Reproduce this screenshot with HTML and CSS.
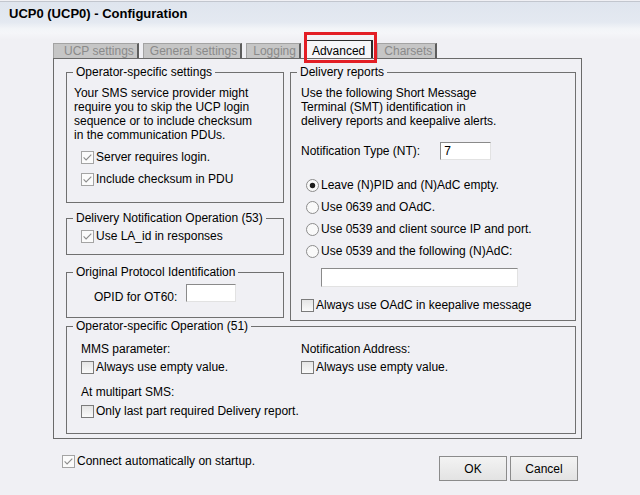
FILE: index.html
```html
<!DOCTYPE html>
<html lang="en">
<head>
<meta charset="utf-8">
<title>UCP0 (UCP0) - Configuration</title>
<link rel="stylesheet" href="styles.css">
</head>
<body>
<div class="window">
  <header class="titlebar"><span class="title">UCP0 (UCP0) - Configuration</span></header>

  <nav class="tabs">
    <span class="tab first">UCP settings</span>
    <span class="tab">General settings</span>
    <span class="tab">Logging</span>
    <span class="tab active">Advanced</span>
    <span class="tab">Charsets</span>
  </nav>

  <section class="panel">
    <div class="columns">
      <div class="col-left">
        <div class="group g-operator">
          <div class="legend">Operator-specific settings</div>
          <p class="desc">Your SMS service provider might<br>require you to skip the UCP login<br>sequence or to include checksum<br>in the communication PDUs.</p>
          <div class="checks">
            <label class="check">
              <svg class="box" width="13" height="13" viewBox="0 0 13 13"><rect x=".5" y=".5" width="12" height="12" fill="#fbfbfb" stroke="#a4a4a4"/><path d="M2.6 6.4 5.1 9 10.3 3.6" fill="none" stroke="#8c8c8c" stroke-width="1.1"/></svg>
              <span>Server requires login.</span>
            </label>
            <label class="check">
              <svg class="box" width="13" height="13" viewBox="0 0 13 13"><rect x=".5" y=".5" width="12" height="12" fill="#fbfbfb" stroke="#a4a4a4"/><path d="M2.6 6.4 5.1 9 10.3 3.6" fill="none" stroke="#8c8c8c" stroke-width="1.1"/></svg>
              <span>Include checksum in PDU</span>
            </label>
          </div>
        </div>

        <div class="group g-dno">
          <div class="legend">Delivery Notification Operation (53)</div>
          <div class="checks">
            <label class="check">
              <svg class="box" width="13" height="13" viewBox="0 0 13 13"><rect x=".5" y=".5" width="12" height="12" fill="#fbfbfb" stroke="#a4a4a4"/><path d="M2.6 6.4 5.1 9 10.3 3.6" fill="none" stroke="#8c8c8c" stroke-width="1.1"/></svg>
              <span>Use LA_id in responses</span>
            </label>
          </div>
        </div>

        <div class="group g-opid">
          <div class="legend">Original Protocol Identification</div>
          <div class="opid-row">
            <span class="opid-label">OPID for OT60:</span>
            <span class="field opid-field"></span>
          </div>
        </div>
      </div>

      <div class="group g-delivery">
        <div class="legend">Delivery reports</div>
        <p class="desc desc-right">Use the following Short Message<br>Terminal (SMT) identification in<br>delivery reports and keepalive alerts.</p>
        <div class="nt-row">
          <span class="nt-label">Notification Type (NT):</span>
          <span class="field nt-field">7</span>
        </div>
        <div class="radios">
          <label class="radio">
            <svg width="13" height="13" viewBox="0 0 13 13"><circle cx="6.5" cy="6.5" r="6" fill="#f9f9f9" stroke="#8c8c8c"/><circle cx="6.5" cy="6.5" r="2.7" fill="#1c1c1c"/></svg>
            <span>Leave (N)PID and (N)AdC empty.</span>
          </label>
          <label class="radio">
            <svg width="13" height="13" viewBox="0 0 13 13"><circle cx="6.5" cy="6.5" r="6" fill="#f9f9f9" stroke="#8c8c8c"/></svg>
            <span>Use 0639 and OAdC.</span>
          </label>
          <label class="radio">
            <svg width="13" height="13" viewBox="0 0 13 13"><circle cx="6.5" cy="6.5" r="6" fill="#f9f9f9" stroke="#8c8c8c"/></svg>
            <span>Use 0539 and client source IP and port.</span>
          </label>
          <label class="radio">
            <svg width="13" height="13" viewBox="0 0 13 13"><circle cx="6.5" cy="6.5" r="6" fill="#f9f9f9" stroke="#8c8c8c"/></svg>
            <span>Use 0539 and the following (N)AdC:</span>
          </label>
        </div>
        <span class="field adc-field"></span>
        <label class="check keepalive">
          <svg class="box" width="13" height="13" viewBox="0 0 13 13"><defs><linearGradient id="ub1" x1="0" y1="0" x2="0" y2="1"><stop offset="0" stop-color="#e4e4e4"/><stop offset="1" stop-color="#fbfbfb"/></linearGradient></defs><rect x=".5" y=".5" width="12" height="12" fill="url(#ub1)" stroke="#7b7b7b"/></svg>
          <span>Always use OAdC in keepalive message</span>
        </label>
      </div>
    </div>

    <div class="group g-operation">
      <div class="legend">Operator-specific Operation (51)</div>
      <div class="op-grid">
        <div class="op-col">
          <div class="op-label">MMS parameter:</div>
          <label class="check">
            <svg class="box" width="13" height="13" viewBox="0 0 13 13"><rect x=".5" y=".5" width="12" height="12" fill="url(#ub1)" stroke="#7b7b7b"/></svg>
            <span>Always use empty value.</span>
          </label>
          <div class="op-label op-label-2">At multipart SMS:</div>
          <label class="check">
            <svg class="box" width="13" height="13" viewBox="0 0 13 13"><rect x=".5" y=".5" width="12" height="12" fill="url(#ub1)" stroke="#7b7b7b"/></svg>
            <span>Only last part required Delivery report.</span>
          </label>
        </div>
        <div class="op-col">
          <div class="op-label">Notification Address:</div>
          <label class="check">
            <svg class="box" width="13" height="13" viewBox="0 0 13 13"><rect x=".5" y=".5" width="12" height="12" fill="url(#ub1)" stroke="#7b7b7b"/></svg>
            <span>Always use empty value.</span>
          </label>
        </div>
      </div>
    </div>
  </section>

  <footer class="footer">
    <label class="check autoconnect">
      <svg class="box" width="13" height="13" viewBox="0 0 13 13"><rect x=".5" y=".5" width="12" height="12" fill="#fbfbfb" stroke="#a4a4a4"/><path d="M2.6 6.4 5.1 9 10.3 3.6" fill="none" stroke="#8c8c8c" stroke-width="1.1"/></svg>
      <span>Connect automatically on startup.</span>
    </label>
    <div class="buttons">
      <button class="btn" type="button">OK</button>
      <button class="btn" type="button">Cancel</button>
    </div>
  </footer>
</div>
</body>
</html>
```

FILE: styles.css
```css
* { box-sizing: border-box; }

html, body {
  margin: 0;
  padding: 0;
  background: #f0f0f4;
}

body {
  width: 640px;
  height: 495px;
  overflow: hidden;
  font-family: "Liberation Sans", Arial, sans-serif;
  font-size: 12px;
  line-height: 14px;
  color: #000;
}

.window {
  width: 640px;
  height: 495px;
}

/* title bar */
.titlebar {
  height: 39px;
  margin-top: 1px;
  border-top: 1px solid #c2c6ce;
  padding: 4px 9px 0;
  background: linear-gradient(to bottom, #dfe5ee 0px, #e4e9f1 20px, #f3f5f8 27px, #f5f6f9 31px, #f0f0f4 38px);
}

.title {
  font-weight: bold;
  font-size: 13px;
  line-height: 16px;
}

/* tabs */
.tabs {
  display: flex;
  align-items: flex-end;
  gap: 4px;
  height: 18px;
  margin-left: 53px;
}

.tab {
  height: 15px;
  padding: 0 3px 0 6px;
  border-top: 1px solid #a3a3a3;
  border-left: 1px solid #a3a3a3;
  border-right: 2px solid #5d5d5d;
  background: #c6c6c6;
  color: #8a8a8a;
  line-height: 14px;
  white-space: nowrap;
}

.tab.first { padding-left: 10px; }

.tab.active {
  position: relative;
  height: 18px;
  padding: 3px 6px 0;
  border-top: 1px solid #2b2b2b;
  border-left: 1px solid #2b2b2b;
  border-right: 2px solid #2b2b2b;
  background: #f6f6f8;
  color: #000;
}

.tab.active::after {
  content: "";
  position: absolute;
  left: -2px;
  top: -9px;
  right: -6px;
  bottom: -5px;
  border: 3px solid #e31e25;
}

/* panel */
.panel {
  width: 529px;
  height: 381px;
  margin-left: 53px;
  border: 1px solid #6a6a6a;
  padding: 13px 0 0 12px;
}

.columns {
  display: flex;
  gap: 6px;
  align-items: flex-start;
}

.col-left {
  display: flex;
  flex-direction: column;
  width: 218px;
}

.group {
  border: 1px solid #707070;
}

.legend {
  display: table;
  margin: -8px 0 0 6px;
  padding: 0 3px;
  background: #f0f0f4;
  line-height: 14px;
  white-space: nowrap;
}

.desc {
  margin: 7px 0 0;
  padding-left: 7px;
  line-height: 14px;
}

.desc-right { padding-left: 10px; }

.check, .radio {
  display: flex;
  align-items: center;
  height: 22px;
  white-space: nowrap;
}

.check svg, .radio svg {
  flex: none;
  display: block;
  margin-right: 2px;
}

.g-operator { height: 131px; }
.g-operator .checks { margin-top: 4px; padding-left: 14px; }

.g-dno { height: 37px; margin-top: 15px; }
.g-dno .checks { padding-left: 14px; }

.g-opid { height: 46px; margin-top: 17px; }

.opid-row {
  display: flex;
  align-items: flex-start;
  margin-top: 5px;
  padding-left: 27px;
}

.opid-label { margin-top: 6px; }

.field {
  display: block;
  background: #fff;
  border-top: 1px solid #8a8a8a;
  border-left: 1px solid #8a8a8a;
  border-right: 1px solid #e2e2e2;
  border-bottom: 1px solid #e2e2e2;
  padding-left: 3px;
  line-height: 16px;
}

.opid-field {
  width: 50px;
  height: 18px;
  margin-left: 9px;
}

/* delivery reports */
.g-delivery {
  width: 286px;
  height: 249px;
}

.nt-row {
  display: flex;
  align-items: center;
  margin-top: 14px;
  padding-left: 10px;
}

.nt-field {
  width: 51px;
  height: 18px;
  margin-left: 20px;
}

.radios {
  margin-top: 14px;
  padding-left: 15px;
}

.adc-field {
  width: 197px;
  height: 19px;
  margin: 6px 0 0 30px;
}

.keepalive {
  margin-top: 7px;
  padding-left: 10px;
}

/* operator-specific operation */
.g-operation {
  width: 510px;
  height: 108px;
  margin-top: 5px;
}

.op-grid {
  display: grid;
  grid-template-columns: 220px 1fr;
  padding-left: 14px;
}

.op-label { margin-top: 9px; }
.op-label-2 { margin-top: 7px; }
.op-label-2 + .check { margin-top: 1px; }

/* footer */
.footer {
  display: flex;
  align-items: flex-start;
  padding: 0 62px 0 62px;
}

.autoconnect { margin-top: 11px; }

.buttons {
  display: flex;
  gap: 3px;
  margin-left: auto;
  margin-top: 17px;
}

.btn {
  width: 68px;
  height: 25px;
  padding: 0;
  border: 1px solid #8b8b8b;
  border-radius: 0;
  background: linear-gradient(to bottom, #f3f3f3, #e3e3e3);
  font-family: "Liberation Sans", Arial, sans-serif;
  font-size: 12px;
  color: #000;
}
```
